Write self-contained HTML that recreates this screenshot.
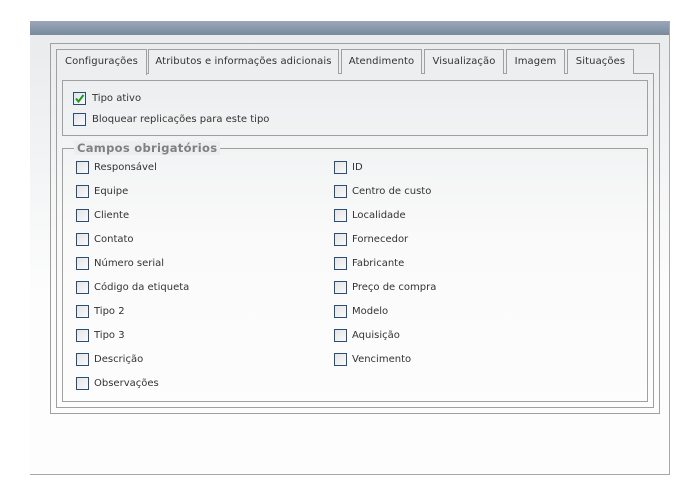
<!DOCTYPE html>
<html><head><meta charset="utf-8"><style>
*{margin:0;padding:0;box-sizing:border-box}
body{width:688px;height:488px;background:#fff;position:relative;overflow:hidden;font-family:"DejaVu Sans","Liberation Sans",sans-serif;font-size:10px;color:#333}
.a{position:absolute}
.panel{left:30px;top:21px;width:640px;height:454px;border-right:1px solid #a8a8a8;border-bottom:1px solid #a8a8a8;background:linear-gradient(#e8eaec,#fdfdfd 60%,#fdfdfd)}
.hdr{left:30px;top:21px;width:639px;height:14px;background:linear-gradient(#9aa8b8,#8595a8 60%,#7a8a9e)}
.box{border:1px solid #a0a0a0}
.tab{top:49px;height:25px;border:1px solid #a0a0a0;border-bottom:none;background:#eceeef;text-align:center;line-height:24px;font-size:10px;color:#333;letter-spacing:0.1px}
.cb{width:13px;height:13px;border:1px solid #2a4e78;background:linear-gradient(135deg,#e4e4e4,#fafafa)}
.t{white-space:nowrap}
</style></head><body>
<div class="a panel"></div>
<div class="a hdr"></div>
<div class="a box" style="left:50px;top:43px;width:610px;height:371px"></div>
<div class="a box" style="left:56px;top:73px;width:598px;height:335px;background:linear-gradient(#eceeef,#fafafa 50%,#fdfdfd)"></div>
<div class="a tab" style="left:56px;width:91px;background:#eceeef;height:26px">Configurações</div>
<div class="a tab" style="left:148px;width:191px">Atributos e informações adicionais</div>
<div class="a tab" style="left:341px;width:81px">Atendimento</div>
<div class="a tab" style="left:424px;width:80px">Visualização</div>
<div class="a tab" style="left:506px;width:59px">Imagem</div>
<div class="a tab" style="left:567px;width:67px">Situações</div>
<div class="a box" style="left:62px;top:80px;width:586px;height:56px"></div>
<div class="a cb" style="left:73px;top:92px"><svg width="11" height="11" style="position:absolute;left:0;top:0"><path d="M2 5.5 L4.5 8.5 L9.5 2" stroke="#1e9a1e" stroke-width="2" fill="none"/></svg></div>
<div class="a t" style="left:92px;top:93px">Tipo ativo</div>
<div class="a cb" style="left:73px;top:113px"></div>
<div class="a t" style="left:92px;top:114px">Bloquear replicações para este tipo</div>
<div class="a box" style="left:62px;top:148px;width:586px;height:254px"></div>
<div class="a t" style="left:74px;top:141px;padding:0 3px;background:#eceeef;font-weight:bold;font-size:11.5px;color:#808080;letter-spacing:0.3px">Campos obrigatórios</div>
<div id="f"></div>
<script>
var L=["Responsável","Equipe","Cliente","Contato","Número serial","Código da etiqueta","Tipo 2","Tipo 3","Descrição","Observações"];
var R=["ID","Centro de custo","Localidade","Fornecedor","Fabricante","Preço de compra","Modelo","Aquisição","Vencimento"];
var h="";
function add(x,arr){arr.forEach(function(s,i){var y=161+i*24;h+='<div class="a cb" style="left:'+x+'px;top:'+y+'px"></div><div class="a t" style="left:'+(x+18)+'px;top:'+(y+1)+'px">'+s+'</div>';});}
add(76,L);add(334,R);
document.getElementById("f").innerHTML=h;
</script>
</body></html>
